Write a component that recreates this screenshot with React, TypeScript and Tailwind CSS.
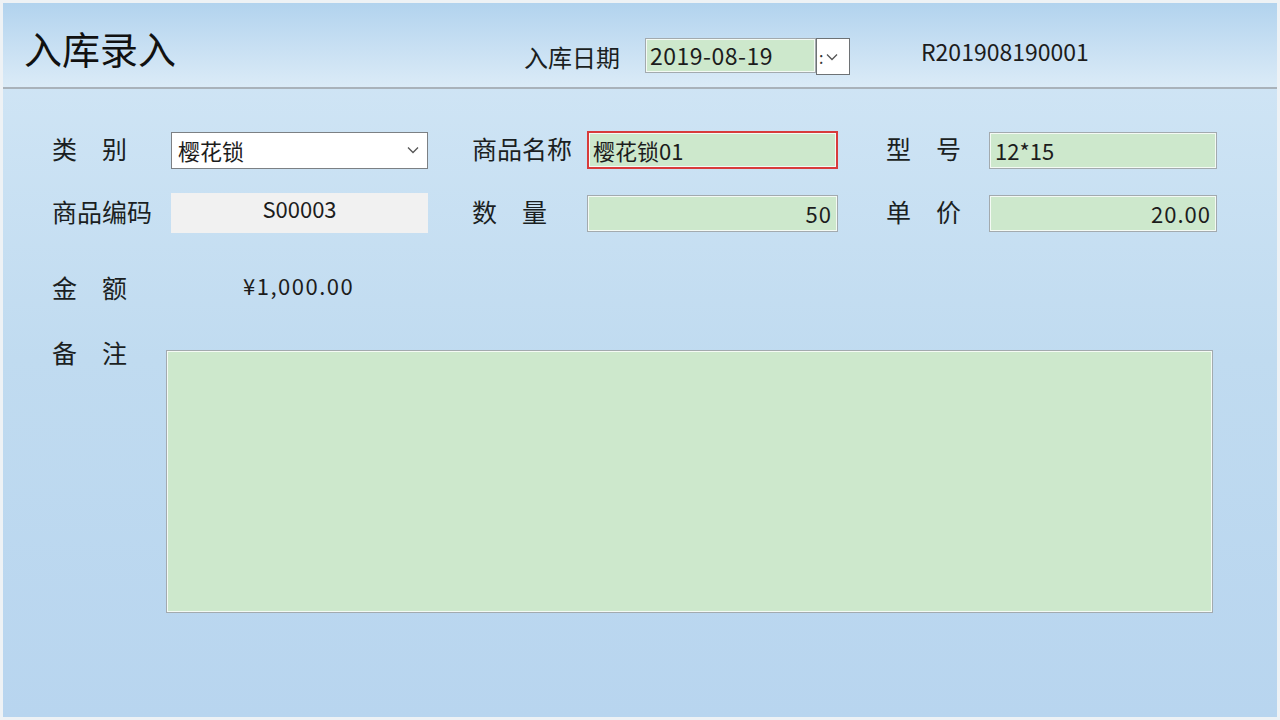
import React from "react";

const font = "font-['Noto_Sans_CJK_SC',sans-serif]";

const Label: React.FC<{ text: string; w: string; ml?: string }> = ({ text, w, ml = "" }) => (
  <div className={`${w} ${ml} shrink-0 pb-[4px] text-[25px] leading-none text-[#1b1f22] whitespace-pre`}>{text}</div>
);

const GreenInput: React.FC<{ value: string; w: string; h: string; right?: boolean; red?: boolean }> = ({
  value,
  w,
  h,
  right,
  red,
}) => (
  <div
    className={`${w} ${h} shrink-0 flex items-center bg-[#cde8cc] px-[6px] text-[22px] leading-none text-[#1c1c1c] ${
      red
        ? "shadow-[inset_0_0_0_2px_#d83b3b,inset_0_0_0_3px_#f4faf4]"
        : "shadow-[inset_0_0_0_1px_#a3aaae,inset_0_0_0_2px_#f4faf4]"
    } ${right ? "justify-end tracking-[1px]" : "justify-start"}`}
  >
    {value}
  </div>
);

const Chevron: React.FC<{ className?: string }> = ({ className }) => (
  <svg width="12" height="8" viewBox="0 0 12 8" className={className}>
    <path d="M1 1.5 L6 6.5 L11 1.5" fill="none" stroke="#555" strokeWidth="1.3" />
  </svg>
);

export default function App() {
  return (
    <div
      className={`${font} w-[1280px] h-[720px] overflow-hidden border-[3px] border-[#eef2f5] flex flex-col bg-gradient-to-b from-[#d3e7f6] via-[#c0dbf0] to-[#b8d5ef]`}
    >
      {/* header */}
      <div className="h-[86px] shrink-0 flex items-start border-b-2 border-[#a9b2ba] bg-gradient-to-b from-[#b2d3ee] to-[#dbebf7]">
        <div className="ml-[21px] w-[500px] mt-[26px] text-[38px] leading-none text-[#111]">入库录入</div>
        <div className="w-[121px] mt-[42px] text-[24px] leading-none text-[#1b1f22]">入库日期</div>
        <div className="w-[171px] h-[35px] mt-[35px] flex items-center bg-[#cde8cc] shadow-[inset_0_0_0_1px_#a3aaae,inset_0_0_0_2px_#f4faf4] px-[5px] text-[23px] tracking-[0.5px] leading-none text-[#1c1c1c]">
          2019-08-19
        </div>
        <div className="w-[34px] h-[37px] mt-[35px] flex items-center bg-white border border-[#6e7275] pl-[2px]">
          <span className="text-[16px] leading-none text-[#333] mr-[3px]">:</span>
          <Chevron />
        </div>
        <div className="ml-[71px] mt-[37px] text-[23px] leading-none text-[#1c1c1c]">R201908190001</div>
      </div>

      {/* body */}
      <div className="flex flex-col pl-[49px] pt-[42px]">
        <div className="flex items-center h-[38px]">
          <Label text={"类　别"} w="w-[119px]" />
          <div className="w-[257px] h-[37px] shrink-0 flex items-center justify-between bg-white border border-[#7c8084] pl-[6px] pr-[8px] text-[22px] leading-none text-[#1c1c1c]">
            <span>樱花锁</span>
            <Chevron />
          </div>
          <Label text="商品名称" w="w-[115px]" ml="ml-[44px]" />
          <GreenInput value="樱花锁01" w="w-[251px]" h="h-[38px]" red />
          <Label text={"型　号"} w="w-[103px]" ml="ml-[48px]" />
          <GreenInput value="12*15" w="w-[228px]" h="h-[37px]" />
        </div>

        <div className="flex items-center h-[40px] mt-[24px]">
          <Label text="商品编码" w="w-[119px]" />
          <div className="w-[257px] h-[40px] shrink-0 flex justify-center bg-[#f1f1f1] pt-[4px] text-[22px] leading-none text-[#1c1c1c]">
            S00003
          </div>
          <Label text={"数　量"} w="w-[115px]" ml="ml-[44px]" />
          <GreenInput value="50" w="w-[251px]" h="h-[37px]" right />
          <Label text={"单　价"} w="w-[103px]" ml="ml-[48px]" />
          <GreenInput value="20.00" w="w-[228px]" h="h-[37px]" right />
        </div>

        <div className="flex items-center h-[30px] mt-[41px]">
          <Label text={"金　额"} w="w-[119px]" />
          <div className="ml-[72px] mb-[8px] text-[22px] tracking-[1.5px] leading-none text-[#1c1c1c]">¥1,000.00</div>
        </div>

        <div className="flex items-start mt-[36px]">
          <Label text={"备　注"} w="w-[114px]" />
          <div className="w-[1047px] h-[263px] mt-[10px] bg-[#cde8cc] shadow-[inset_0_0_0_1px_#a3aaae,inset_0_0_0_2px_#f4faf4]" />
        </div>
      </div>
    </div>
  );
}
